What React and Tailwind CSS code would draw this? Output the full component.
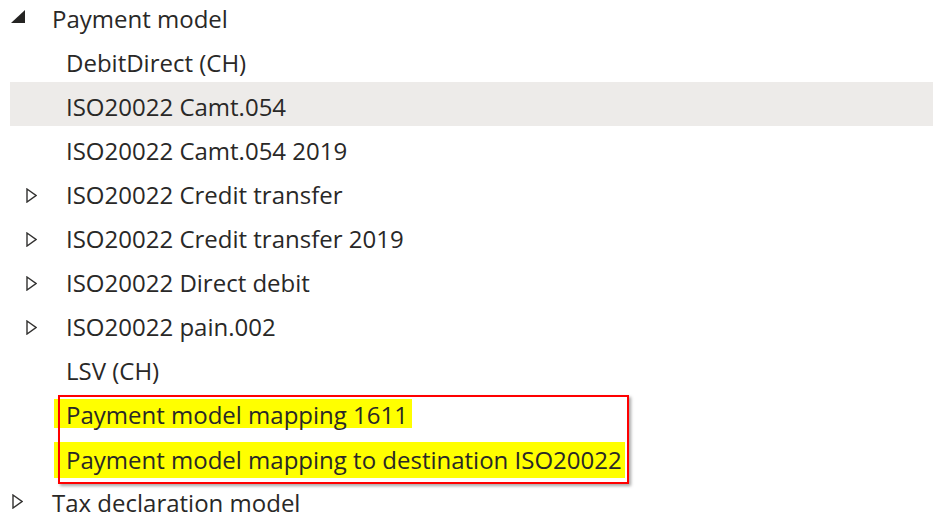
const font = { fontFamily: '"Open Sans", "Noto Sans", sans-serif' };

function Collapsed() {
  return (
    <svg width="11" height="15" viewBox="0 0 11 15" className="block">
      <path d="M1 1 L10 7.5 L1 14 Z" fill="none" stroke="#323130" strokeWidth="1.4" strokeLinejoin="miter" />
    </svg>
  );
}

function Expanded() {
  return (
    <svg width="14" height="13" viewBox="0 0 14 13" className="block">
      <path d="M14 0 L14 13 L0 13 Z" fill="#252423" />
    </svg>
  );
}

function Child({ label, expandable, selected }) {
  return (
    <div className={`flex items-center h-[44px] ml-[10px] ${selected ? "bg-[#edebe9]" : ""}`}>
      <div className="w-[56px] pl-[16px] pt-[6px] flex items-center">{expandable && <Collapsed />}</div>
      <span className="pt-[6px]">{label}</span>
    </div>
  );
}

export default function App() {
  return (
    <div className="relative w-[933px] h-[528px] overflow-hidden bg-white text-[#292827] text-[24px] leading-[30px]" style={font}>
      <div className="-mt-[6px]">
        <div className="flex items-center h-[44px]">
          <div className="w-[52px] pl-[11px] flex items-center">
            <Expanded />
          </div>
          <span className="pt-[6px]">Payment model</span>
        </div>
        <Child label="DebitDirect (CH)" />
        <Child label="ISO20022 Camt.054" selected />
        <Child label="ISO20022 Camt.054 2019" />
        <Child label="ISO20022 Credit transfer" expandable />
        <Child label="ISO20022 Credit transfer 2019" expandable />
        <Child label="ISO20022 Direct debit" expandable />
        <Child label="ISO20022 pain.002" expandable />
        <Child label="LSV (CH)" />
        <div className="flex h-[44px] pl-[54px]">
          <span className="flex items-center mt-[9px] mb-[6px] pl-[12px] pr-[4px] bg-[#ffff00]">
            <span className="pt-[2px]">Payment model mapping 1611</span>
          </span>
        </div>
        <div className="flex h-[44px] pl-[54px]">
          <span className="flex items-center mt-[8px] pl-[12px] pr-[3px] bg-[#ffff00]">
            <span>Payment model mapping to destination ISO20022</span>
          </span>
        </div>
        <div className="flex items-center h-[44px]">
          <div className="w-[52px] pl-[12px] pt-[2px] flex items-center">
            <Collapsed />
          </div>
          <span className="pt-[6px]">Tax declaration model</span>
        </div>
      </div>
      <div className="absolute left-[58px] top-[395px] w-[571px] h-[89px] border-2 border-[#ff0000] shadow-[2px_2px_3px_rgba(0,0,0,0.35)]" />
    </div>
  );
}
